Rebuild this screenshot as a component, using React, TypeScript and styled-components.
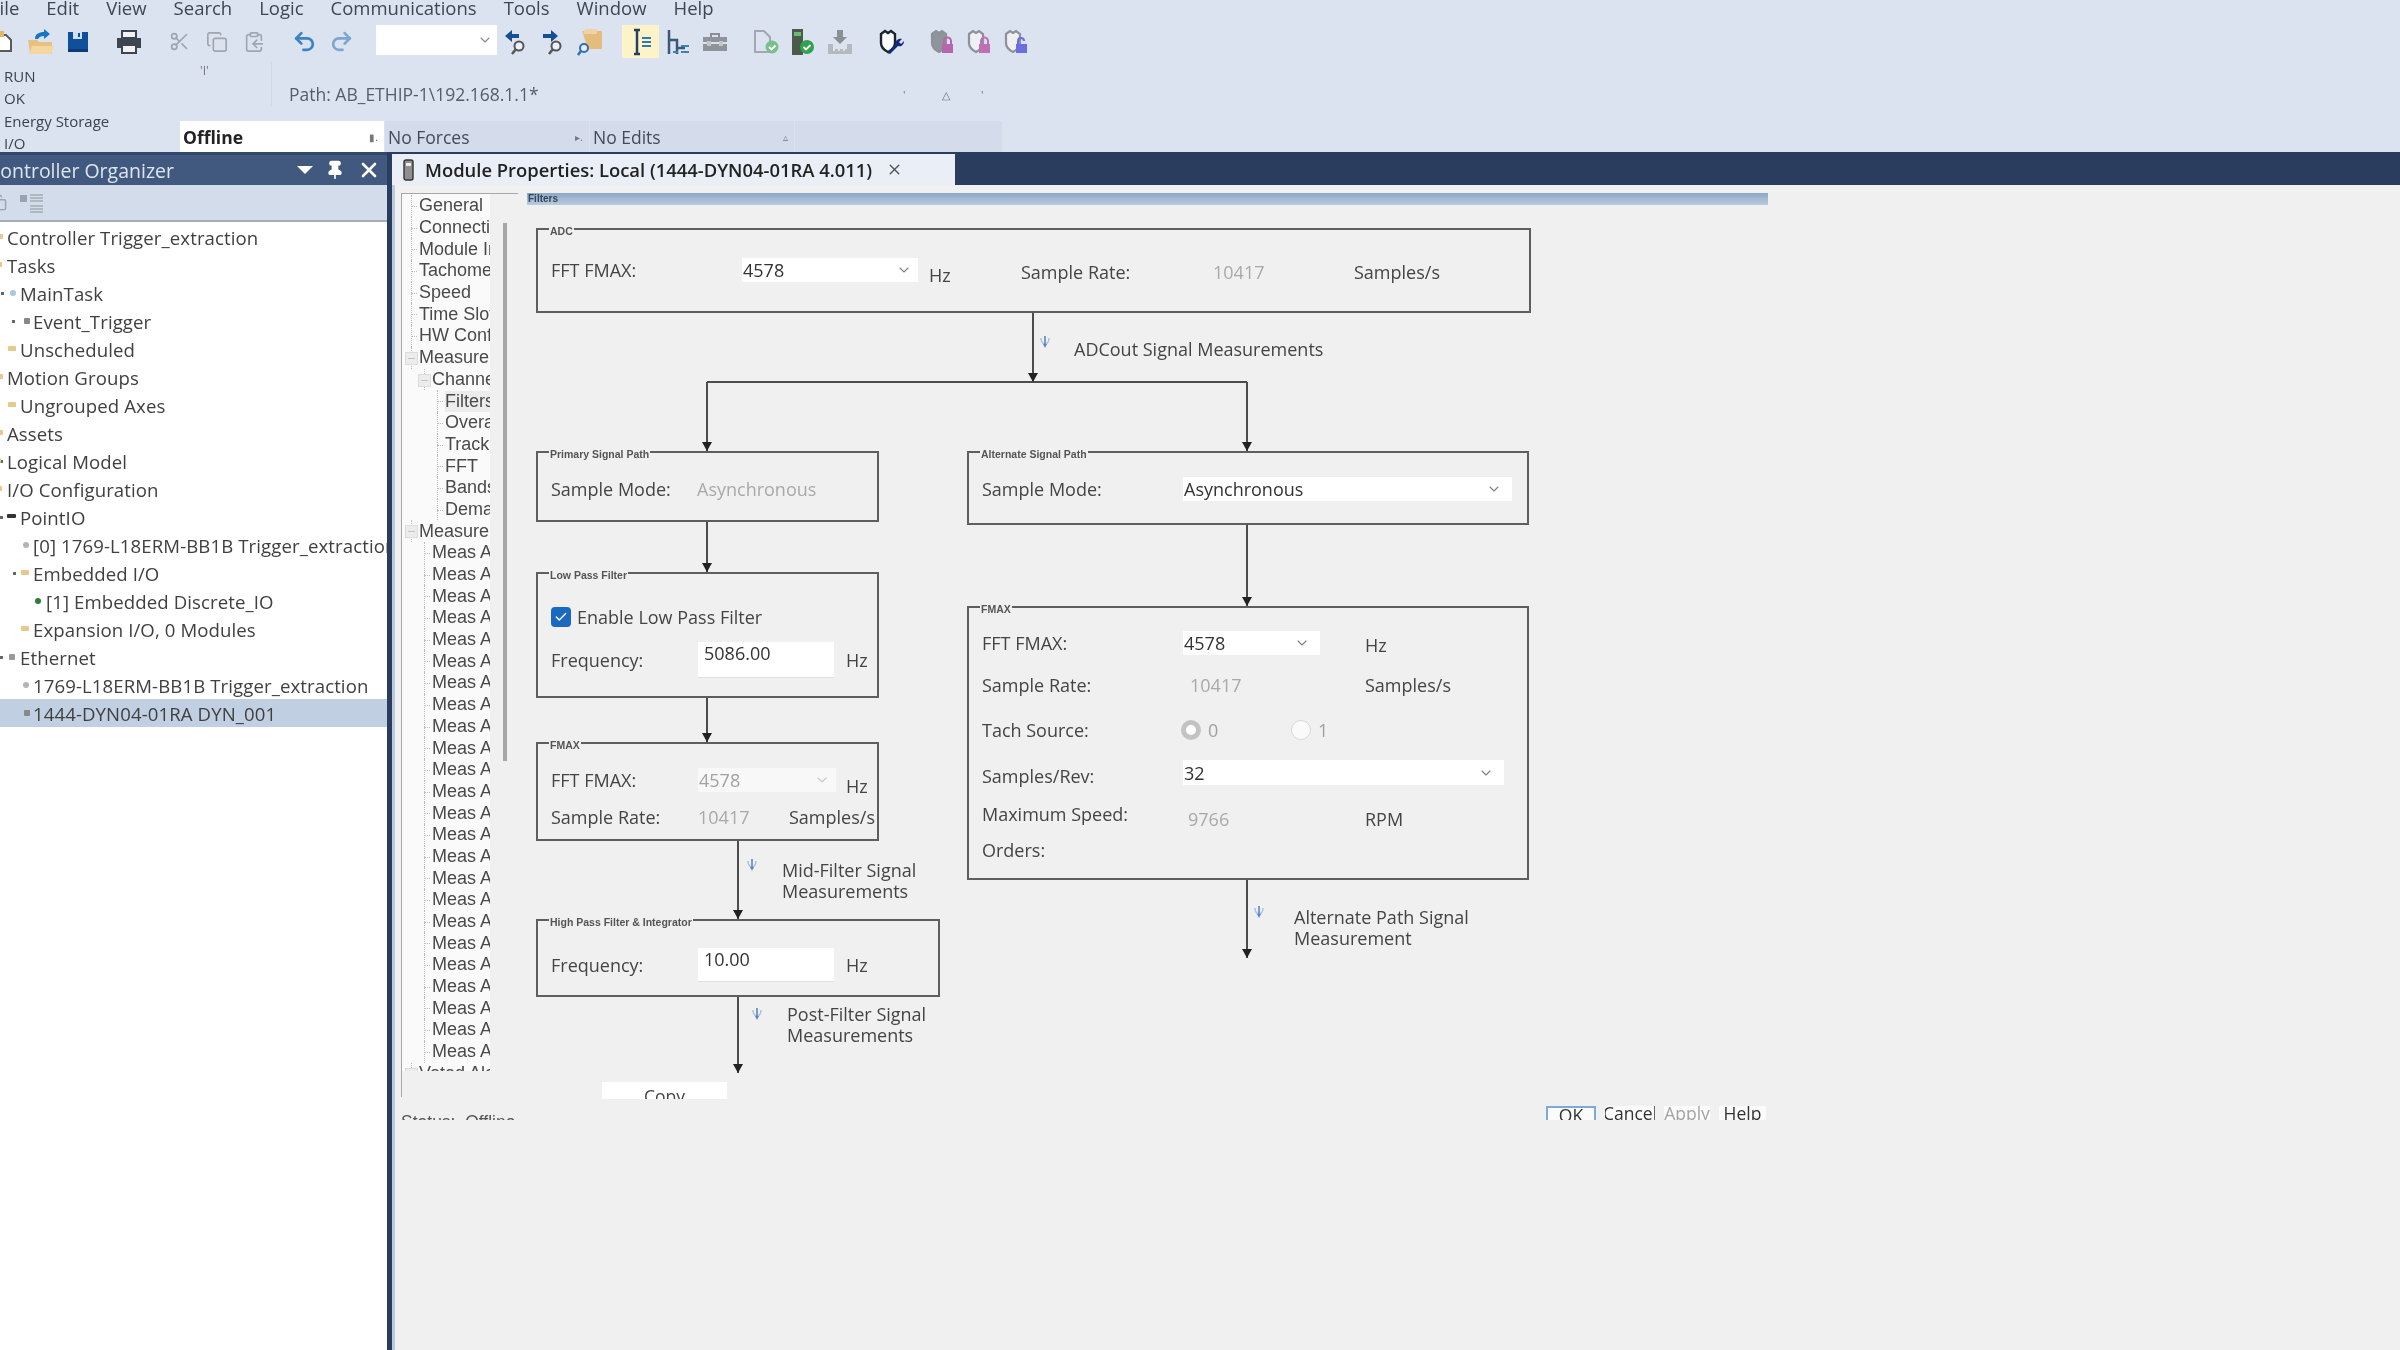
import React from "react"
import styled, { createGlobalStyle } from "styled-components"
import { Scissors, Copy, ClipboardCopy, Undo2, Redo2, ChevronDown, Pin, X, Check } from "lucide-react"

const ui = '"Open Sans", "Liberation Sans", sans-serif'
const arial = '"Liberation Sans", Arial, sans-serif'

const GlobalStyle = createGlobalStyle`
  html, body {
    margin: 0;
    padding: 0;
    background: #f0f0f0;
  }
`

const Page = styled.div`
  width: 2400px;
  height: 1350px;
  overflow: hidden;
  display: flex;
  flex-direction: column;
  background: #dbe3f0;
  font-family: ${ui};
  color: #3c3c3c;
  filter: blur(0.55px);
`

/* top chrome */
const MenuBar = styled.div`
  height: 24px;
  flex: none;
  display: flex;
  gap: 27px;
  margin-left: -10px;
  font-size: 18.5px;
  line-height: 16px;
  color: #3e4654;
`

const Toolbar = styled.div`
  height: 38px;
  flex: none;
  display: flex;
  align-items: flex-start;
  margin-left: -15px;
  padding-top: 1px;
  box-sizing: border-box;
`

const Tool = styled.div<{ $active?: boolean }>`
  width: 37px;
  height: 33px;
  flex: none;
  display: flex;
  align-items: center;
  justify-content: center;
  background: ${p => (p.$active ? "#fdf3c8" : "transparent")};
`

const ToolSep = styled.div`
  width: 14px;
  flex: none;
`

const ToolCombo = styled.div`
  width: 121px;
  height: 30px;
  flex: none;
  margin-left: 16px;
  background: #fff;
  display: flex;
  align-items: center;
  justify-content: flex-end;
  padding-right: 4px;
  box-sizing: border-box;
  color: #888;
`

const StatusPanel = styled.div`
  height: 90px;
  flex: none;
  display: flex;
`

const ModeList = styled.div`
  width: 180px;
  flex: none;
  padding: 3px 0 0 4px;
  box-sizing: border-box;
  font-size: 15px;
  line-height: 22.3px;
  color: #3c4350;
`

const StatusRight = styled.div`
  width: 823px;
  display: flex;
  flex-direction: column;
`

const PathRow = styled.div`
  height: 59px;
  flex: none;
  display: flex;
  align-items: center;
  font-size: 17.5px;
  color: #555d6c;
  position: relative;
`

const KeySwitch = styled.span`
  width: 92px;
  flex: none;
  height: 44px;
  margin-top: -16px;
  font-size: 12px;
  padding-left: 20px;
  box-sizing: border-box;
  color: #777;
  border-right: 1px solid #d2dae8;
  margin-right: 17px;
`

const PathText = styled.span`
  width: 614px;
  flex: none;
  margin-top: 5px;
`

const PathMark = styled.span`
  width: 39px;
  flex: none;
  font-size: 11px;
  margin-top: 5px;
  color: #6a7280;
`

const StateRow = styled.div`
  height: 31px;
  flex: none;
  display: flex;
`

const StateBox = styled.div<{ $on?: boolean; $w: number }>`
  width: ${p => p.$w}px;
  flex: none;
  display: flex;
  align-items: center;
  justify-content: space-between;
  padding: 0 6px 0 3px;
  box-sizing: border-box;
  font-size: 17.5px;
  background: ${p => (p.$on ? "#fff" : "#d4dcec")};
  font-weight: ${p => (p.$on ? 700 : 400)};
  color: ${p => (p.$on ? "#222" : "#444b58")};
  border-right: 1px solid #dbe3f0;
  small {
    font-size: 10px;
    font-weight: 400;
    color: #777;
  }
`

/* workspace */
const Workspace = styled.div`
  flex: 1;
  display: flex;
  min-height: 0;
`

const Organizer = styled.div`
  width: 387px;
  flex: none;
  display: flex;
  flex-direction: column;
  background: #fff;
`

const PaneTitle = styled.div`
  height: 33px;
  flex: none;
  border-top: 3px solid #33476a;
  box-sizing: border-box;
  background: #41597f;
  color: #dfe5ee;
  font-size: 19.5px;
  display: flex;
  align-items: center;
  padding: 0 6px 0 0;
  margin-left: 0;
  span {
    flex: 1;
    margin-left: -12px;
    white-space: nowrap;
  }
  svg {
    flex: none;
  }
`

const PaneButtons = styled.div`
  display: flex;
  align-items: center;
  gap: 12px;
  color: #fff;
`

const DropMark = styled.i`
  width: 0;
  height: 0;
  border-left: 8px solid transparent;
  border-right: 8px solid transparent;
  border-top: 8px solid #fff;
`

const PaneTools = styled.div`
  height: 37px;
  flex: none;
  box-sizing: border-box;
  background: #d3dcea;
  border-bottom: 2px solid #a5adb9;
  display: flex;
  align-items: center;
  gap: 12px;
  padding-left: 0;
`

const TreeRow = styled.div<{ $level: number; $selected?: boolean }>`
  height: 28px;
  flex: none;
  position: relative;
  display: flex;
  align-items: center;
  white-space: nowrap;
  padding-left: ${p => 7 + p.$level * 13}px;
  font-size: 18.6px;
  letter-spacing: 0.1px;
  color: #404040;
  overflow: hidden;
  background: ${p => (p.$selected ? "#c0cfe1" : "transparent")};
`

const TreeList = styled.div`
  padding-top: 1px;
  display: flex;
  flex-direction: column;
`

const RowGlyph = styled.i<{ $kind: string; $left: number }>`
  position: absolute;
  left: ${p => p.$left}px;
  top: 11px;
  width: ${p => (p.$kind === "folder" ? 8 : p.$kind === "chip" ? 9 : 6)}px;
  height: ${p => (p.$kind === "folder" ? 5 : p.$kind === "chip" ? 4 : 6)}px;
  border-radius: ${p => (p.$kind === "dot" || p.$kind === "task" || p.$kind === "leaf" ? "50%" : "1px")};
  background: ${p =>
    ({
      folder: "#e8c88e",
      chip: "#333",
      dot: "#b4b4b4",
      task: "#a9c8dc",
      leaf: "#2f7a3a",
      net: "#999",
      small: "#888",
    } as Record<string, string>)[p.$kind]};
`

const RowToggle = styled.i<{ $left: number }>`
  position: absolute;
  left: ${p => p.$left}px;
  top: 13px;
  width: 3px;
  height: 3px;
  background: #666;
`

const Splitter = styled.div`
  width: 5px;
  flex: none;
  background: #2b3d5e;
`

const Document = styled.div`
  flex: 1;
  display: flex;
  flex-direction: column;
  min-width: 0;
`

const TabStrip = styled.div`
  height: 33px;
  flex: none;
  background: #2b3d5e;
  display: flex;
  align-items: flex-end;
`

const Tab = styled.div`
  width: 563px;
  height: 31px;
  flex: none;
  background: #e9eef7;
  color: #222;
  font-size: 18.4px;
  font-weight: 600;
  display: flex;
  align-items: center;
  padding-left: 11px;
  box-sizing: border-box;
  white-space: nowrap;
  gap: 10px;
  svg {
    flex: none;
  }
`

const TabClose = styled.span`
  margin-left: 4px;
  display: flex;
  color: #555;
`

const DialogBody = styled.div`
  flex: 1;
  background: #f0f0f0;
  border-left: 3px solid #bccbe0;
  display: flex;
  padding: 8px 0 0 6px;
  min-height: 0;
`

const NavColumn = styled.div`
  width: 126px;
  flex: none;
  display: flex;
  flex-direction: column;
`

const NavFrame = styled.div`
  width: 117px;
  height: 904px;
  flex: none;
  border-top: 1px solid #a8a8a8;
  border-left: 1px solid #a8a8a8;
  box-sizing: border-box;
  display: flex;
  align-items: flex-start;
`

const NavTree = styled.div`
  width: 88px;
  height: 877px;
  flex: none;
  overflow: hidden;
  background: #fafafa;
  padding-top: 1px;
  box-sizing: border-box;
`

const NavRow = styled.div<{ $level: number; $selected?: boolean }>`
  height: 21.7px;
  position: relative;
  display: flex;
  align-items: center;
  padding-left: ${p => 17 + p.$level * 13}px;
  font-family: ${arial};
  font-size: 18px;
  color: #4a4a4a;
  white-space: nowrap;
  &::before {
    content: "";
    position: absolute;
    left: ${p => 9 + p.$level * 13}px;
    top: 0;
    bottom: 0;
    border-left: 1px dotted #bdbdbd;
  }
  &::after {
    content: "";
    position: absolute;
    left: ${p => 9 + p.$level * 13}px;
    top: 11px;
    width: 6px;
    border-top: 1px dotted #bdbdbd;
  }
  span {
    background: ${p => (p.$selected ? "#ececec" : "transparent")};
    position: relative;
    z-index: 1;
  }
`

const NavToggle = styled.i<{ $level: number }>`
  position: absolute;
  z-index: 1;
  left: ${p => 3 + p.$level * 13}px;
  top: 5px;
  width: 11px;
  height: 11px;
  background: #ececec;
  border: 1px solid #dcdcdc;
  &::after {
    content: "";
    position: absolute;
    left: 2px;
    right: 2px;
    top: 5px;
    border-top: 1px solid #c4c4c4;
  }
`

const NavScroll = styled.div`
  width: 4px;
  height: 538px;
  flex: none;
  margin: 29px 0 0 13px;
  background: #a6a6a6;
`

const StatusLine = styled.div`
  height: 7px;
  flex: none;
  margin-top: 16px;
  overflow: hidden;
  font-family: ${arial};
  font-size: 17.5px;
  line-height: 19px;
  white-space: pre;
  color: #555;
`

const PagePanel = styled.div`
  width: 1241px;
  flex: none;
  display: flex;
  flex-direction: column;
`

const PageHeader = styled.div`
  height: 12px;
  flex: none;
  background: linear-gradient(180deg, #8da9c6, #b9cbdd);
  font-family: ${arial};
  font-size: 10px;
  line-height: 12px;
  font-weight: 700;
  color: #33465a;
  padding-left: 1px;
`

/* the signal diagram: places below are page coordinates */
const Canvas = styled.div`
  height: 901px;
  flex: none;
  position: relative;
  font-size: 18px;
`

const Wires = styled.svg`
  position: absolute;
  left: 0;
  top: 0;
`

const GroupBox = styled.div<{ $x: number; $y: number; $w: number; $h: number }>`
  position: absolute;
  left: ${p => p.$x - 527}px;
  top: ${p => p.$y - 205}px;
  width: ${p => p.$w}px;
  height: ${p => p.$h}px;
  border: 2px solid #5e5e5e;
  box-sizing: border-box;
  padding-left: 13px;
  display: flex;
  flex-direction: column;
`

const Legend = styled.span`
  position: absolute;
  left: 11px;
  top: -5px;
  padding: 0 1px;
  background: #f0f0f0;
  font-family: ${arial};
  font-size: 10.5px;
  line-height: 12px;
  font-weight: 700;
  color: #555;
`

const FieldRow = styled.div<{ $cols: string; $h?: number; $mt: number }>`
  display: grid;
  grid-template-columns: ${p => p.$cols};
  height: ${p => p.$h ?? 24}px;
  margin-top: ${p => p.$mt}px;
  align-items: center;
  flex: none;
`

const Label = styled.span<{ $drop?: number }>`
  color: #444;
  white-space: nowrap;
  transform: translateY(${p => p.$drop ?? 0}px);
`

const ReadOnly = styled(Label)`
  color: #a9a9a9;
`

const Combo = styled.div<{ $off?: boolean; $pad?: number }>`
  height: 100%;
  background: ${p => (p.$off ? "#f8f8f8" : "#fff")};
  color: ${p => (p.$off ? "#a2a2a2" : "#333")};
  display: flex;
  align-items: center;
  justify-content: space-between;
  padding: 0 ${p => p.$pad ?? 6}px 0 1px;
  box-sizing: border-box;
  svg {
    flex: none;
    color: ${p => (p.$off ? "#c8c8c8" : "#808080")};
  }
`

const TextInput = styled.div`
  height: 100%;
  background: #fff;
  border-bottom: 1px solid #dedede;
  box-sizing: border-box;
  padding: 0 0 0 6px;
  line-height: 22px;
  color: #333;
  margin-top: 0;
`

const CheckMark = styled.span`
  width: 20px;
  height: 20px;
  border-radius: 4px;
  background: #1b69bf;
  color: #fff;
  display: flex;
  align-items: center;
  justify-content: center;
`

const CheckRow = styled.div`
  display: flex;
  align-items: center;
  gap: 6px;
`

const Radio = styled.span<{ $on?: boolean }>`
  width: 20px;
  height: 20px;
  border-radius: 50%;
  box-sizing: border-box;
  background: ${p => (p.$on ? "#fff" : "#fafafa")};
  border: ${p => (p.$on ? "5px solid #c3c3c3" : "1px solid #d8d8d8")};
`

const RadioRow = styled.div`
  display: flex;
  align-items: center;
  gap: 7px;
  color: #a0a0a0;
`

const Caption = styled.div<{ $x: number; $y: number }>`
  position: absolute;
  left: ${p => p.$x - 527}px;
  top: ${p => p.$y - 205}px;
  line-height: 21px;
  color: #444;
  white-space: nowrap;
`

const ProbeMark = styled.svg<{ $x: number; $y: number }>`
  position: absolute;
  left: ${p => p.$x - 527 - 5}px;
  top: ${p => p.$y - 205 - 7}px;
`

const CopyButton = styled.div`
  position: absolute;
  left: ${602 - 527}px;
  top: ${1082 - 205}px;
  width: 125px;
  height: 17px;
  background: #fff;
  overflow: hidden;
  text-align: center;
  font-size: 17.5px;
  line-height: 28px;
  color: #444;
`

const Footer = styled.div`
  height: 14px;
  flex: none;
  display: flex;
  justify-content: flex-end;
  gap: 9px;
  padding-right: 2px;
`

const FootButton = styled.div<{ $w: number; $primary?: boolean; $off?: boolean }>`
  width: ${p => p.$w}px;
  height: 14px;
  background: #fbfbfb;
  overflow: hidden;
  display: flex;
  justify-content: center;
  font-size: 17.5px;
  line-height: 15px;
  color: ${p => (p.$off ? "#a3a3a3" : "#333")};
  box-sizing: border-box;
  border: ${p => (p.$primary ? "2px solid #7fa9d8" : "none")};
  border-bottom: none;
`

/* drawings */
const Doc = () => (
  <svg width="20" height="24" viewBox="0 0 20 24">
    <path d="M3 5h9l5 5v11H3z" fill="#fff" stroke="#5a5a5a" strokeWidth="2" />
    <path d="M1 1h9v6H1z" fill="#e2b866" />
  </svg>
)
const OpenFolder = () => (
  <svg width="30" height="28" viewBox="0 0 30 28">
    <path d="M2 12h9l2 2h13v12H4z" fill="#e6c17f" />
    <path d="M6 18h22l-3 8H3z" fill="#f3d79f" />
    <path d="M9 11c0-5 4-7 9-7V1l6 5-6 5V8c-3 0-5 1-6 3z" fill="#1874c4" />
  </svg>
)
const Floppy = () => (
  <svg width="22" height="22" viewBox="0 0 22 22">
    <path d="M1 1h20v20H1z" fill="#0f4f9c" />
    <path d="M6 1h9v7H6z" fill="#cfe0f2" />
    <path d="M11 2h2v4h-2z" fill="#0f4f9c" />
    <path d="M1 18h20v3H1z" fill="#0a3c7c" />
  </svg>
)
const Printer = () => (
  <svg width="26" height="24" viewBox="0 0 26 24">
    <path d="M6 1h14v7H6z" fill="#f2f2f2" stroke="#3d4650" strokeWidth="2" />
    <path d="M1 8h24v10H1z" fill="#3d4650" />
    <path d="M6 15h14v8H6z" fill="#f2f2f2" stroke="#3d4650" strokeWidth="2" />
  </svg>
)
const FindArrow = ({ dir }: { dir: "back" | "forward" }) => (
  <svg width="24" height="26" viewBox="0 0 24 26">
    <path
      d={dir === "back" ? "M1 7l7-6v4h7v4H8v4z" : "M17 7l-7-6v4H2v4h8v4z"}
      fill="#16508f"
    />
    <circle cx="15" cy="17" r="4.5" fill="#eef2f7" stroke="#555" strokeWidth="2" />
    <path d="M12 20l-4 5" stroke="#555" strokeWidth="2.5" />
  </svg>
)
const FindFolder = () => (
  <svg width="28" height="28" viewBox="0 0 28 28">
    <path d="M6 3h20v18H12z" fill="#e4bd7d" />
    <path d="M9 1h12v5H7z" fill="#edd4a6" />
    <circle cx="8" cy="20" r="4" fill="#e9f1f9" stroke="#2d6fb0" strokeWidth="2" />
    <path d="M5 23l-3 4" stroke="#2d6fb0" strokeWidth="2.5" />
  </svg>
)
const TreeOne = () => (
  <svg width="24" height="30" viewBox="0 0 24 30">
    <path d="M5 3h6M8 3v24M5 27h6" stroke="#26405f" strokeWidth="2.5" fill="none" />
    <path d="M13 11h9M13 15h9M13 19h9" stroke="#2f79b5" strokeWidth="2.2" />
  </svg>
)
const TreeTwo = () => (
  <svg width="26" height="28" viewBox="0 0 26 28">
    <path d="M4 2v24M4 12h8v14M12 20h8" stroke="#3a5878" strokeWidth="2.5" fill="none" />
    <path d="M8 24h5M16 24h8M16 18h8" stroke="#3d83b8" strokeWidth="2.2" />
  </svg>
)
const Toolbox = () => (
  <svg width="24" height="20" viewBox="0 0 24 20">
    <path d="M8 5V2h8v3" fill="none" stroke="#8a8f96" strokeWidth="2" />
    <path d="M0 5h24v5H0zM0 12h24v7H0z" fill="#8f949b" />
    <path d="M4 9h4v5H4zM16 9h4v5h-4z" fill="#c4c8ce" />
  </svg>
)
const DocCheck = () => (
  <svg width="28" height="26" viewBox="0 0 28 26">
    <path d="M3 2h9l6 6v15H3z" fill="none" stroke="#a4a8ae" strokeWidth="2" />
    <circle cx="20" cy="18" r="6.5" fill="#79c08c" />
    <path d="M17 18l2.5 2.5 4-4" stroke="#fff" strokeWidth="1.8" fill="none" />
  </svg>
)
const ModuleCheck = () => (
  <svg width="24" height="28" viewBox="0 0 24 28">
    <path d="M1 1h11v26H1z" fill="#4c5a4e" />
    <path d="M3 4h7v4H3z" fill="#6dbb70" />
    <circle cx="16" cy="19" r="7" fill="#2ea24e" />
    <path d="M12.5 19l2.5 2.5 4.5-4.5" stroke="#fff" strokeWidth="1.8" fill="none" />
  </svg>
)
const Download = () => (
  <svg width="26" height="26" viewBox="0 0 26 26">
    <path d="M10 1h6v7h4l-7 7-7-7h4z" fill="#8c9095" />
    <path d="M1 15v10h24V15h-5v5H6v-5z" fill="#b6b9bf" />
    <path d="M6 21h2M11 21h2M16 21h2" stroke="#eee" strokeWidth="1.6" />
  </svg>
)
const shieldPath = "M3 5l4-3 3 2 3-2 4 3v9c0 4-3 7-7 9-4-2-7-5-7-9z"
const ShieldWrench = () => (
  <svg width="26" height="26" viewBox="0 0 26 26">
    <path d={shieldPath} fill="#fff" stroke="#1d2430" strokeWidth="2.4" />
    <path d="M9 24l9-9c-1-3 2-6 6-5l-3 3 2 2 3-3c0 4-3 6-6 5l-8 8z" fill="#142a80" />
  </svg>
)
const ShieldLock = ({ fill, tone, open }: { fill: string; tone: string; open?: boolean }) => (
  <svg width="26" height="26" viewBox="0 0 26 26">
    <path d={shieldPath} fill={fill} stroke="#8d9198" strokeWidth="2.2" />
    <path d="M13 15h11v9H13z" fill={tone} />
    <path d={open ? "M15 15v-3a3 3 0 0 1 6 0" : "M15 15v-3a3.500 3.500 0 0 1 7 0v3"} fill="none" stroke={tone} strokeWidth="2" />
  </svg>
)
const ModuleMark = () => (
  <svg width="12" height="22" viewBox="0 0 12 22">
    <rect x="1" y="1" width="9" height="20" rx="2" fill="#8f8f8f" stroke="#333" strokeWidth="1.4" />
    <rect x="3" y="4" width="5" height="3" fill="#eee" />
  </svg>
)
const ProbeIcon = ({ x, y }: { x: number; y: number }) => (
  <ProbeMark $x={x} $y={y} width="10" height="14" viewBox="0 0 10 14">
    <path d="M1 3c0 5 3 6 4 6s4-1 4-6" fill="none" stroke="#a9c3e6" strokeWidth="1.5" />
    <path d="M5 1v8" stroke="#5f86bb" strokeWidth="1.6" />
    <path d="M3 9h4l-2 4z" fill="#5f86bb" />
  </ProbeMark>
)

const arrow = (x: number, y: number) => `M${x - 5} ${y - 9}h10l-5 9z`
const lines = [
  "M1033 313V382",
  "M707 382H1247",
  "M707 382V451",
  "M1247 382V451",
  "M707 522V572",
  "M707 698V742",
  "M738 841V919",
  "M738 997V1073",
  "M1247 525V606",
  "M1247 880V958",
]
const heads = [[1033, 382], [707, 451], [1247, 451], [707, 572], [707, 742], [738, 919], [738, 1073], [1247, 606], [1247, 958]]

const menu = ["File", "Edit", "View", "Search", "Logic", "Communications", "Tools", "Window", "Help"]

type Node = { text: string; level: number; glyph?: string; glyphLeft?: number; toggle?: number; selected?: boolean }
const organizer: Node[] = [
  { text: "Controller Trigger_extraction", level: 0, glyph: "folder", glyphLeft: -5 },
  { text: "Tasks", level: 0, glyph: "folder", glyphLeft: -6 },
  { text: "MainTask", level: 1, glyph: "task", glyphLeft: 10, toggle: 1 },
  { text: "Event_Trigger", level: 2, glyph: "small", glyphLeft: 24, toggle: 12 },
  { text: "Unscheduled", level: 1, glyph: "folder", glyphLeft: 8 },
  { text: "Motion Groups", level: 0, glyph: "folder", glyphLeft: -5 },
  { text: "Ungrouped Axes", level: 1, glyph: "folder", glyphLeft: 8 },
  { text: "Assets", level: 0, glyph: "folder", glyphLeft: -5 },
  { text: "Logical Model", level: 0, glyph: "folder", glyphLeft: -7, toggle: 0 },
  { text: "I/O Configuration", level: 0, glyph: "folder", glyphLeft: -6 },
  { text: "PointIO", level: 1, glyph: "chip", glyphLeft: 7, toggle: 0 },
  { text: "[0] 1769-L18ERM-BB1B Trigger_extraction", level: 2, glyph: "dot", glyphLeft: 23 },
  { text: "Embedded I/O", level: 2, glyph: "folder", glyphLeft: 21, toggle: 13 },
  { text: "[1] Embedded Discrete_IO", level: 3, glyph: "leaf", glyphLeft: 35 },
  { text: "Expansion I/O, 0 Modules", level: 2, glyph: "folder", glyphLeft: 21 },
  { text: "Ethernet", level: 1, glyph: "net", glyphLeft: 9, toggle: 0 },
  { text: "1769-L18ERM-BB1B Trigger_extraction", level: 2, glyph: "dot", glyphLeft: 23 },
  { text: "1444-DYN04-01RA DYN_001", level: 2, glyph: "small", glyphLeft: 24, selected: true },
]

type Nav = { text: string; level: number; toggle?: boolean; selected?: boolean }
const navItems: Nav[] = [
  { text: "General", level: 0 },
  { text: "Connection", level: 0 },
  { text: "Module Info", level: 0 },
  { text: "Tachometer", level: 0 },
  { text: "Speed", level: 0 },
  { text: "Time Slot", level: 0 },
  { text: "HW Configuration", level: 0 },
  { text: "Measurement", level: 0, toggle: true },
  { text: "Channel", level: 1, toggle: true },
  { text: "Filters", level: 2, selected: true },
  { text: "Overall", level: 2 },
  { text: "Tracking", level: 2 },
  { text: "FFT", level: 2 },
  { text: "Bands", level: 2 },
  { text: "Demand", level: 2 },
  { text: "Measure", level: 0, toggle: true },
  ...Array.from({ length: 24 }, () => ({ text: "Meas Alarm", level: 1 })),
  { text: "Voted Alarm", level: 0, toggle: true },
]

const Chevron = () => <ChevronDown size={16} strokeWidth={1.6} />

export default function App() {
  return (
    <Page>
      <GlobalStyle />
      <MenuBar>
        {menu.map(m => (
          <span key={m}>{m}</span>
        ))}
      </MenuBar>

      <Toolbar>
        <Tool><Doc /></Tool>
        <Tool><OpenFolder /></Tool>
        <Tool><Floppy /></Tool>
        <ToolSep />
        <Tool><Printer /></Tool>
        <ToolSep />
        <Tool><Scissors size={21} color="#a0a6ae" strokeWidth={2} /></Tool>
        <Tool><Copy size={22} color="#a0a6ae" strokeWidth={1.8} /></Tool>
        <Tool><ClipboardCopy size={22} color="#a0a6ae" strokeWidth={1.8} /></Tool>
        <ToolSep />
        <Tool><Undo2 size={25} color="#3d82c2" strokeWidth={2.6} /></Tool>
        <Tool><Redo2 size={25} color="#7fa6cf" strokeWidth={2.6} /></Tool>
        <ToolCombo><Chevron /></ToolCombo>
        <Tool><FindArrow dir="back" /></Tool>
        <Tool><FindArrow dir="forward" /></Tool>
        <Tool><FindFolder /></Tool>
        <ToolSep />
        <Tool $active><TreeOne /></Tool>
        <Tool><TreeTwo /></Tool>
        <Tool><Toolbox /></Tool>
        <ToolSep />
        <Tool><DocCheck /></Tool>
        <Tool><ModuleCheck /></Tool>
        <Tool><Download /></Tool>
        <ToolSep />
        <Tool><ShieldWrench /></Tool>
        <ToolSep />
        <Tool><ShieldLock fill="#8f949b" tone="#b766ad" /></Tool>
        <Tool><ShieldLock fill="#eef0f4" tone="#c06fb4" /></Tool>
        <Tool><ShieldLock fill="#eef0f4" tone="#6a6fe0" open /></Tool>
      </Toolbar>

      <StatusPanel>
        <ModeList>
          <div>RUN</div>
          <div>OK</div>
          <div>Energy Storage</div>
          <div>I/O</div>
        </ModeList>
        <StatusRight>
          <PathRow>
            <KeySwitch>'I'</KeySwitch>
            <PathText>Path: AB_ETHIP-1\192.168.1.1*</PathText>
            <PathMark>'</PathMark>
            <PathMark>&#9651;</PathMark>
            <PathMark>'</PathMark>
          </PathRow>
          <StateRow>
            <StateBox $on $w={205}>
              Offline <small>▮.</small>
            </StateBox>
            <StateBox $w={205}>
              No Forces <small>▸.</small>
            </StateBox>
            <StateBox $w={205}>
              No Edits <small>▵</small>
            </StateBox>
            <StateBox $w={208} />
          </StateRow>
        </StatusRight>
      </StatusPanel>

      <Workspace>
        <Organizer>
          <PaneTitle>
            <span>Controller Organizer</span>
            <PaneButtons>
              <DropMark />
              <Pin size={20} fill="#fff" strokeWidth={2} />
              <X size={24} strokeWidth={2.6} />
            </PaneButtons>
          </PaneTitle>
          <PaneTools>
            <Copy size={17} color="#9ba3ad" style={{ marginLeft: -10 }} />
            <svg width="26" height="22" viewBox="0 0 26 22">
              <path d="M1 3h7v7H1z" fill="#9aa2ac" />
              <path d="M11 3h13M11 6h13M11 9h13M11 14h13M11 17h13M11 20h13" stroke="#a4abb4" strokeWidth="1.4" />
            </svg>
          </PaneTools>
          <TreeList>
            {organizer.map(n => (
              <TreeRow key={n.text + n.level} $level={n.level} $selected={n.selected}>
                {n.toggle !== undefined && <RowToggle $left={n.toggle} />}
                {n.glyph && <RowGlyph $kind={n.glyph} $left={n.glyphLeft ?? 0} />}
                {n.text}
              </TreeRow>
            ))}
          </TreeList>
        </Organizer>
        <Splitter />

        <Document>
          <TabStrip>
            <Tab>
              <ModuleMark />
              <span>Module Properties: Local (1444-DYN04-01RA 4.011)</span>
              <TabClose><X size={17} strokeWidth={2} /></TabClose>
            </Tab>
          </TabStrip>
          <DialogBody>
            <NavColumn>
              <NavFrame>
                <NavTree>
                  {navItems.map((n, i) => (
                    <NavRow key={i} $level={n.level} $selected={n.selected}>
                      {n.toggle && <NavToggle $level={n.level} />}
                      <span>{n.text}</span>
                    </NavRow>
                  ))}
                </NavTree>
                <NavScroll />
              </NavFrame>
              <StatusLine>Status:  Offline</StatusLine>
            </NavColumn>

            <PagePanel>
              <PageHeader>Filters</PageHeader>
              <Canvas>
                <Wires width="1241" height="901" viewBox="527 205 1241 901">
                  <g stroke="#4c4c4c" strokeWidth="2" fill="none">
                    {lines.map(d => (
                      <path key={d} d={d} />
                    ))}
                  </g>
                  {heads.map(([x, y]) => (
                    <path key={`${x}-${y}`} d={arrow(x, y)} fill="#222" />
                  ))}
                </Wires>

                <GroupBox $x={536} $y={228} $w={995} $h={85}>
                  <Legend>ADC</Legend>
                  <FieldRow $cols="191px 176px 11px 92px 192px 141px 1fr" $mt={28}>
                    <Label>FFT FMAX:</Label>
                    <Combo>4578<Chevron /></Combo>
                    <span />
                    <Label $drop={5}>Hz</Label>
                    <Label $drop={2}>Sample Rate:</Label>
                    <ReadOnly $drop={2}>10417</ReadOnly>
                    <Label $drop={2}>Samples/s</Label>
                  </FieldRow>
                </GroupBox>
                <ProbeIcon x={1045} y={342} />
                <Caption $x={1074} $y={339}>ADCout Signal Measurements</Caption>

                <GroupBox $x={536} $y={451} $w={343} $h={71}>
                  <Legend>Primary Signal Path</Legend>
                  <FieldRow $cols="146px 1fr" $mt={24}>
                    <Label>Sample Mode:</Label>
                    <ReadOnly>Asynchronous</ReadOnly>
                  </FieldRow>
                </GroupBox>

                <GroupBox $x={536} $y={572} $w={343} $h={126}>
                  <Legend>Low Pass Filter</Legend>
                  <FieldRow $cols="1fr" $mt={31}>
                    <CheckRow>
                      <CheckMark><Check size={14} strokeWidth={2.4} /></CheckMark>
                      <Label>Enable Low Pass Filter</Label>
                    </CheckRow>
                  </FieldRow>
                  <FieldRow $cols="147px 136px 12px 1fr" $h={36} $mt={13}>
                    <Label>Frequency:</Label>
                    <TextInput>5086.00</TextInput>
                    <span />
                    <Label>Hz</Label>
                  </FieldRow>
                </GroupBox>

                <GroupBox $x={536} $y={742} $w={343} $h={99}>
                  <Legend>FMAX</Legend>
                  <FieldRow $cols="147px 138px 10px 1fr" $mt={24}>
                    <Label>FFT FMAX:</Label>
                    <Combo $off>4578<Chevron /></Combo>
                    <span />
                    <Label $drop={6}>Hz</Label>
                  </FieldRow>
                  <FieldRow $cols="147px 91px 1fr" $mt={13}>
                    <Label>Sample Rate:</Label>
                    <ReadOnly>10417</ReadOnly>
                    <Label>Samples/s</Label>
                  </FieldRow>
                </GroupBox>
                <ProbeIcon x={752} y={865} />
                <Caption $x={782} $y={860}>
                  Mid-Filter Signal
                  <br />
                  Measurements
                </Caption>

                <GroupBox $x={536} $y={919} $w={404} $h={78}>
                  <Legend>High Pass Filter &amp; Integrator</Legend>
                  <FieldRow $cols="147px 136px 12px 1fr" $h={34} $mt={27}>
                    <Label>Frequency:</Label>
                    <TextInput>10.00</TextInput>
                    <span />
                    <Label>Hz</Label>
                  </FieldRow>
                </GroupBox>
                <ProbeIcon x={757} y={1014} />
                <Caption $x={787} $y={1004}>
                  Post-Filter Signal
                  <br />
                  Measurements
                </Caption>

                <CopyButton>Copy</CopyButton>

                <GroupBox $x={967} $y={451} $w={562} $h={74}>
                  <Legend>Alternate Signal Path</Legend>
                  <FieldRow $cols="201px 329px" $mt={24}>
                    <Label>Sample Mode:</Label>
                    <Combo $pad={10}>Asynchronous<Chevron /></Combo>
                  </FieldRow>
                </GroupBox>

                <GroupBox $x={967} $y={606} $w={562} $h={274}>
                  <Legend>FMAX</Legend>
                  <FieldRow $cols="201px 137px 45px 1fr" $mt={23}>
                    <Label>FFT FMAX:</Label>
                    <Combo $pad={10}>4578<Chevron /></Combo>
                    <span />
                    <Label $drop={2}>Hz</Label>
                  </FieldRow>
                  <FieldRow $cols="208px 175px 1fr" $mt={18}>
                    <Label>Sample Rate:</Label>
                    <ReadOnly>10417</ReadOnly>
                    <Label>Samples/s</Label>
                  </FieldRow>
                  <FieldRow $cols="199px 110px 1fr" $mt={21}>
                    <Label>Tach Source:</Label>
                    <RadioRow><Radio $on />0</RadioRow>
                    <RadioRow><Radio />1</RadioRow>
                  </FieldRow>
                  <FieldRow $cols="201px 321px" $h={25} $mt={18}>
                    <Label $drop={3}>Samples/Rev:</Label>
                    <Combo $pad={10}>32<Chevron /></Combo>
                  </FieldRow>
                  <FieldRow $cols="206px 177px 1fr" $mt={18}>
                    <Label $drop={-1}>Maximum Speed:</Label>
                    <ReadOnly $drop={4}>9766</ReadOnly>
                    <Label $drop={4}>RPM</Label>
                  </FieldRow>
                  <FieldRow $cols="1fr" $mt={11}>
                    <Label>Orders:</Label>
                  </FieldRow>
                </GroupBox>
                <ProbeIcon x={1259} y={912} />
                <Caption $x={1294} $y={907}>
                  Alternate Path Signal
                  <br />
                  Measurement
                </Caption>
              </Canvas>
              <Footer>
                <FootButton $w={50} $primary>OK</FootButton>
                <FootButton $w={50}>Cancel</FootButton>
                <FootButton $w={46} $off>Apply</FootButton>
                <FootButton $w={47}>Help</FootButton>
              </Footer>
            </PagePanel>
          </DialogBody>
        </Document>
      </Workspace>
    </Page>
  )
}
